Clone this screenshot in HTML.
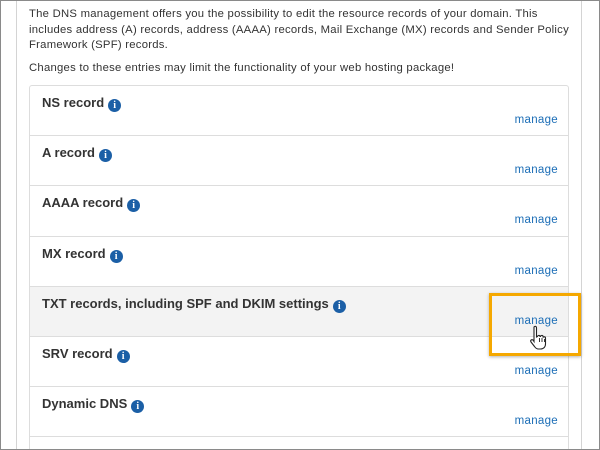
<!DOCTYPE html>
<html><head><style>
html,body{margin:0;width:600px;height:450px;overflow:hidden}
body{background:#fff;font-family:"Liberation Sans",sans-serif;position:relative}
.frame{position:absolute;left:0;top:0;width:600px;height:450px;border:1px solid #8a8a8a;box-sizing:border-box}
.vl{position:absolute;top:0;height:450px;width:1px;background:#d4d4d4}
.txt{position:absolute;left:29px;font-size:11.3px;letter-spacing:0.25px;color:#333;line-height:15.5px;width:560px;white-space:nowrap}
.panel{position:absolute;left:29px;top:85px;width:538px;height:380px;border:1px solid #ddd;border-radius:3px;}
.row{position:absolute;left:0;width:538px;height:50px;border-bottom:1px solid #ddd;box-sizing:border-box}
.row .t{position:absolute;left:12px;top:9px;font-size:13px;font-weight:bold;color:#333}
.row .m{position:absolute;right:10px;top:28px;font-size:11.5px;letter-spacing:0.3px;color:#1b6db6}
.i{display:inline-block;width:13px;height:13px;border-radius:50%;background:#1b5fa6;color:#fff;font-size:10px;font-weight:bold;text-align:center;line-height:13px;vertical-align:-1px;margin-left:4px;font-family:"Liberation Serif",serif}
.hl{position:absolute;left:489px;top:293px;width:92px;height:63px;border:3px solid #f5a800;box-sizing:border-box;box-shadow:0 1px 3px rgba(0,0,0,.3)}
</style></head><body>
<div class="vl" style="left:16px"></div>
<div class="vl" style="left:581px"></div>
<div class="txt" style="top:7px">The DNS management offers you the possibility to edit the resource records of your domain. This<br>includes address (A) records, address (AAAA) records, Mail Exchange (MX) records and Sender Policy<br>Framework (SPF) records.</div>
<div class="txt" style="top:61px">Changes to these entries may limit the functionality of your web hosting package!</div>
<div class="panel">
<div class="row" style="top:0"><span class="t">NS record<span class="i">i</span></span><span class="m">manage</span></div>
<div class="row" style="top:50px"><span class="t">A record<span class="i">i</span></span><span class="m">manage</span></div>
<div class="row" style="top:100px;height:51px"><span class="t">AAAA record<span class="i">i</span></span><span class="m">manage</span></div>
<div class="row" style="top:151px"><span class="t">MX record<span class="i">i</span></span><span class="m">manage</span></div>
<div class="row" style="top:201px;background:#f3f3f3"><span class="t">TXT records, including SPF and DKIM settings<span class="i">i</span></span><span class="m">manage</span></div>
<div class="row" style="top:251px"><span class="t">SRV record<span class="i">i</span></span><span class="m">manage</span></div>
<div class="row" style="top:301px"><span class="t">Dynamic DNS<span class="i">i</span></span><span class="m">manage</span></div>
</div>
<div class="hl"></div>
<svg style="position:absolute;left:529px;top:325px" width="20" height="28" viewBox="0 0 20 28"><path d="M5 2c1-1 2.5-1 2.5 1v9l1-.5c.5-1.5 2.5-1.5 2.5 0l.5 0c.5-1.5 2.5-1.5 2.5 0v1c.5-1 2.5-1 2.5.5v6c0 3-2 5-5 5h-2c-2 0-3-1-4-2.5L2 17c-1-1.5.5-3 2-2l1 1.5z" fill="#fff" stroke="#222" stroke-width="1.1"/><path d="M10.5 13v4M13 13v4M15.5 14v3" stroke="#222" stroke-width=".9"/></svg>
<div class="frame"></div>
</body></html>
